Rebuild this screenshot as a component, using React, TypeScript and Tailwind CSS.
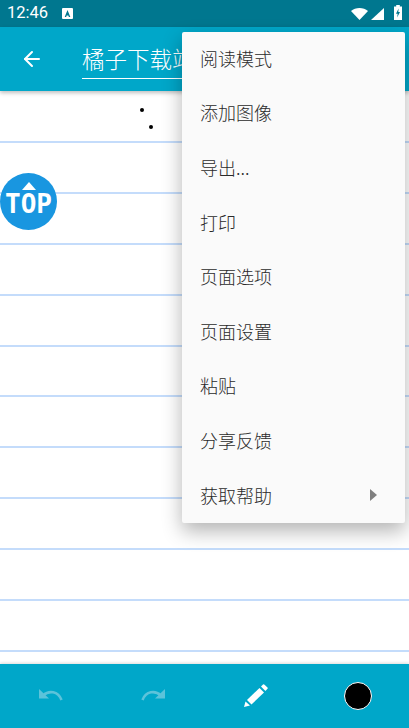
import { ArrowLeft } from "lucide-react";

const menuItems = ["阅读模式", "添加图像", "导出...", "打印", "页面选项", "页面设置", "粘贴", "分享反馈", "获取帮助"];
const cjk = { fontFamily: '"Noto Sans CJK SC", "Noto Sans", sans-serif' };

function StatusBar() {
  return (
    <div className="h-[27px] shrink-0 bg-[#00778f] flex items-center pl-[7px] pr-[7px] text-white">
      <span className="w-[40px] text-[16.5px] font-['Roboto',sans-serif] leading-none">12:46</span>
      <svg width="11" height="11" viewBox="0 0 11 11" className="ml-[15px]">
        <rect x="0" y="0" width="11" height="11" rx="1" fill="#fff" />
        <path d="M5.5 2 L8.3 9 H6.9 L6.3 7.4 H4.7 L4.1 9 H2.7 Z" fill="#00778f" />
      </svg>
      <div className="ml-auto flex items-end pb-[2px]">
        <svg width="17" height="12" viewBox="0 0 17 12">
          <path d="M0 3 C4.5 -1 12.5 -1 17 3 L8.5 12 Z" fill="#fff" />
        </svg>
        <svg width="13" height="12" viewBox="0 0 13 12" className="ml-[3px]">
          <path d="M0 12 L13 0 V12 Z" fill="#fff" />
        </svg>
        <svg width="8" height="15" viewBox="0 0 8 15" className="ml-[10px]">
          <path d="M2.2 0 H5.8 V1.5 H8 V15 H0 V1.5 H2.2 Z" fill="#fff" />
          <path d="M4.6 3.5 L2 8.8 H3.7 L3.1 12.5 L6 7 H4.3 Z" fill="#00778f" />
        </svg>
      </div>
    </div>
  );
}

function Toolbar() {
  return (
    <div className="h-[64px] shrink-0 bg-[#00a7c9] flex items-center pl-[20px] overflow-hidden shadow-[0_2px_4px_rgba(0,0,0,0.25)] z-10">
      <ArrowLeft size={24} color="#fff" strokeWidth={2} />
      <div className="ml-[38px] w-[120px] h-[36px] border-b border-white mt-[3px] overflow-hidden whitespace-nowrap text-white text-[22.5px] font-light leading-[30px]" style={cjk}>
        橘子下载站
      </div>
    </div>
  );
}

function Page() {
  return (
    <div className="relative flex-1 bg-white overflow-hidden">
      <div className="flex flex-col pt-[50px]">
        {Array.from({ length: 11 }).map((_, i) => (
          <div key={i} className="h-[50.9px] shrink-0 border-t-2 border-[#c4dcfb]" />
        ))}
      </div>
      <div className="absolute left-[140px] top-[17px] w-[4px] h-[4px] rounded-full bg-black" />
      <div className="absolute left-[149px] top-[34px] w-[4px] h-[4px] rounded-full bg-black" />
      <div className="absolute left-0 top-[82px] w-[57px] h-[57px] rounded-full bg-[#1996e0] flex flex-col items-center pt-[9px]">
        <div className="w-0 h-0 mb-[4px] border-x-[7px] border-x-transparent border-b-[8px] border-b-white" />
        <span className="text-white font-bold text-[26px] leading-[20px] font-['DejaVu_Sans_Mono',monospace]">TOP</span>
      </div>
    </div>
  );
}

function BottomBar() {
  return (
    <div className="h-[64px] shrink-0 bg-[#00a7c9] grid grid-cols-4 items-center shadow-[0_-1px_3px_rgba(0,0,0,0.15)] z-10">
      <div className="flex justify-center">
        <svg width="24" height="12" viewBox="0 0 24 12" className="mt-[-2px]">
          <path d="M0 0 V9.5 H10 Z" fill="#5cc3da" />
          <path d="M4 6.5 C10 1 19 2 22.5 11" fill="none" stroke="#5cc3da" strokeWidth="2.6" />
        </svg>
      </div>
      <div className="flex justify-center">
        <svg width="24" height="12" viewBox="0 0 24 12" className="mt-[-2px]">
          <path d="M24 0 V9.5 H14 Z" fill="#5cc3da" />
          <path d="M20 6.5 C14 1 5 2 1.5 11" fill="none" stroke="#5cc3da" strokeWidth="2.6" />
        </svg>
      </div>
      <div className="flex justify-center">
        <svg width="24" height="23" viewBox="0 0 24 23" fill="#fff" className="mt-[-2px]">
          <path d="M0 23 L1.5 17.5 L6 21.5 Z" />
          <path d="M3 16 L15.5 4 L20 8.5 L7.5 20.5 Z" />
          <path d="M17 2.5 L19 0.5 Q19.6 0 20.2 0.5 L23.5 3.5 Q24 4.2 23.5 4.8 L21.4 7 Z" />
        </svg>
      </div>
      <div className="flex justify-center">
        <div className="w-[28px] h-[28px] rounded-full bg-black border border-white" />
      </div>
    </div>
  );
}

function Menu() {
  return (
    <div className="absolute left-[182px] top-[32px] w-[223px] bg-[#fafafa] rounded-[2px] shadow-[0_8px_20px_rgba(0,0,0,0.3)] z-20" style={cjk}>
      {menuItems.map((label, i) => (
        <div key={label} className="h-[54.6px] flex items-center justify-between pl-[18px] pr-[28px] pb-[2px] text-[18px] font-light text-[#2a2a2a]">
          <span>{label}</span>
          {i === menuItems.length - 1 && (
            <div className="w-0 h-0 border-y-[6px] border-y-transparent border-l-[7px] border-l-[#808080]" />
          )}
        </div>
      ))}
    </div>
  );
}

export default function App() {
  return (
    <div className="relative w-[409px] h-[728px] flex flex-col overflow-hidden bg-white">
      <StatusBar />
      <Toolbar />
      <Page />
      <BottomBar />
      <Menu />
    </div>
  );
}
